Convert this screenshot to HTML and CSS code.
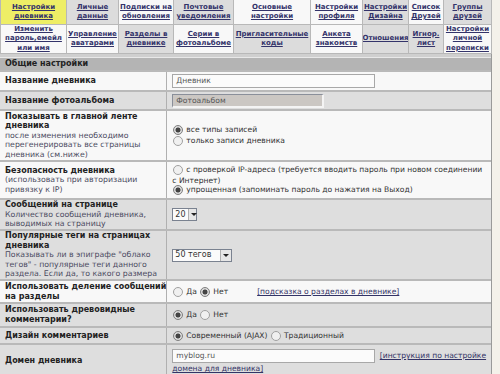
FILE: index.html
```html
<!DOCTYPE html>
<html lang="ru">

<head>
    <meta charset="UTF-8">
    <title>Настройки дневника</title>
    <link rel="stylesheet" href="styles.css">
</head>

<body>
    <div class="page">
        <div class="tabs">
            <a class="tab active">Настройки<br>дневника</a>
            <a class="tab grey">Личные<br>данные</a>
            <a class="tab">Подписки на<br>обновления</a>
            <a class="tab grey">Почтовые<br>уведомления</a>
            <a class="tab">Основные<br>настройки</a>
            <a class="tab">Настройки<br>профиля</a>
            <a class="tab grey">Настройки<br>Дизайна</a>
            <a class="tab">Список<br>Друзей</a>
            <a class="tab grey">Группы<br>друзей</a>

            <a class="tab">Изменить<br>пароль,емейл<br>или имя</a>
            <a class="tab">Управление<br>аватарами</a>
            <a class="tab grey">Разделы в<br>дневнике</a>
            <a class="tab">Серии в<br>фотоальбоме</a>
            <a class="tab grey">Пригласительные<br>коды</a>
            <a class="tab">Анкета<br>знакомств</a>
            <a class="tab grey">Отношения</a>
            <a class="tab grey">Игнор.<br>лист</a>
            <a class="tab">Настройки<br>личной<br>переписки</a>
        </div>

        <div class="strip"></div>

        <table class="settings">
            <tr class="head">
                <td colspan="2">Общие настройки</td>
            </tr>
            <tr class="r20">
                <td class="label">Название дневника</td>
                <td class="value"><span class="field wide">Дневник</span></td>
            </tr>
            <tr class="grey r19">
                <td class="label">Название фотоальбома</td>
                <td class="value"><span class="field disabled">Фотоальбом</span></td>
            </tr>
            <tr class="r51">
                <td class="label">Показывать в главной ленте<br>дневника
                    <span class="note">после изменения необходимо<br>перегенерировать все страницы<br>дневника (см.ниже)</span>
                </td>
                <td class="value">
                    <div class="opt"><span class="radio on"></span>все типы записей</div>
                    <div class="opt"><span class="radio"></span>только записи дневника</div>
                </td>
            </tr>
            <tr class="r38">
                <td class="label">Безопасность дневника
                    <span class="note">(использовать при авторизации<br>привязку к IP)</span>
                </td>
                <td class="value">
                    <div class="opt"><span class="radio"></span>с проверкой IP-адреса (требуется вводить пароль при новом соединении</div>
                    <div class="cont">с Интернет)</div>
                    <div class="opt"><span class="radio on"></span>упрощенная (запоминать пароль до нажатия на Выход)</div>
                </td>
            </tr>
            <tr class="grey r31">
                <td class="label">Сообщений на странице
                    <span class="note">Количество сообщений дневника,<br>выводимых на страницу</span>
                </td>
                <td class="value"><span class="select num">20<span class="arrow"></span></span></td>
            </tr>
            <tr class="grey r50">
                <td class="label">Популярные теги на страницах<br>дневника
                    <span class="note">Показывать ли в эпиграфе "облако<br>тегов" - популярные теги данного<br>раздела. Если да, то какого размера</span>
                </td>
                <td class="value"><span class="select tags">50 тегов<span class="arrow"></span></span></td>
            </tr>
            <tr class="r23">
                <td class="label">Использовать деление сообщений<br>на разделы</td>
                <td class="value"><span class="radio"></span>Да <span class="radio on"></span>Нет<a class="link hint">[подсказка о разделах в дневнике]</a></td>
            </tr>
            <tr class="grey r24">
                <td class="label">Использовать древовидные<br>комментарии?</td>
                <td class="value"><span class="radio on"></span>Да <span class="radio"></span>Нет</td>
            </tr>
            <tr class="grey r17">
                <td class="label">Дизайн комментариев</td>
                <td class="value"><span class="radio on"></span>Современный (AJAX) <span class="radio"></span>Традиционный</td>
            </tr>
            <tr class="grey r32">
                <td class="label">Домен дневника</td>
                <td class="value domain"><span class="field wide">myblog.ru</span> <a class="link">[инструкция по настройке<br>домена для дневника]</a></td>
            </tr>
        </table>
    </div>
</body>

</html>
```

FILE: styles.css
```css
* {
    margin: 0;
    padding: 0;
    box-sizing: border-box;
}

body {
    background-color: #f4f1ea;
    font-family: "DejaVu Sans", Verdana, sans-serif;
    font-size: 8px;
    line-height: 9.6px;
    color: #222;
}

.page {
    width: 492px;
    border-right: 1px solid #9a9a9a;
    background-color: #f8f8f8;
}

/* Tabs on top */
.tabs {
    display: grid;
    grid-template-columns: 66px 52px 55px 60px 77px 52px 46px 35px 48px;
    grid-template-rows: 25px 29px;
    border-left: 1px solid #b8b8b8;
}

.tab {
    display: flex;
    align-items: center;
    justify-content: center;
    text-align: center;
    font-weight: bold;
    font-size: 7px;
    line-height: 9.3px;
    color: #33336a;
    text-decoration: underline;
    background-color: #f8f8f8;
    border-right: 1px solid #b8b8b8;
    border-bottom: 1px solid #b8b8b8;
    white-space: nowrap;
    overflow: hidden;
}

.tab.grey {
    background-color: #dcdcdc;
}

.tab.active {
    background-color: #eeee66;
}

.strip {
    height: 4px;
    background-color: #cfcfcf;
    border-bottom: 1px solid #e8e8e8;
}

/* Settings table */
.settings {
    width: 100%;
    border-collapse: collapse;
}

.settings td {
    border-top: 2px solid #b9b9b9;
    vertical-align: middle;
    padding: 0;
    overflow: hidden;
}

.settings tr.grey td {
    background-color: #dedede;
}

.settings tr.head td {
    height: 13px;
    background-color: #b4b4b4;
    font-weight: bold;
    padding: 0 5px;
    border-top: none;
}

/* fixed row heights, like the original form */
.r17 td { height: 17px; }
.r19 td { height: 19px; }
.r20 td { height: 20px; }
.r23 td { height: 23px; }
.r24 td { height: 24px; }
.r31 td { height: 31px; }
.r32 td { height: 32px; }
.r38 td { height: 38px; }
.r50 td { height: 50px; }
.r51 td { height: 51px; }

.label {
    width: 166px;
    padding-left: 5px !important;
    font-weight: bold;
    border-right: 1px solid #b0b0b0;
    white-space: nowrap;
}

.note {
    display: block;
    font-weight: normal;
    font-size: 7.8px;
    color: #4a4a5e;
}

.value {
    padding-left: 5px !important;
    color: #333;
    font-size: 7.6px;
    white-space: nowrap;
}

.field {
    display: inline-block;
    height: 14px;
    padding: 1px 3px;
    border: 1px solid #a8a8a8;
    background-color: #fbfbfb;
    color: #555;
    line-height: 10px;
    vertical-align: middle;
}

.field.wide {
    width: 203px;
}

.field.disabled {
    width: 152px;
    height: 14px;
    background-color: #cbc7c3;
    border-color: #8a8f9a #f4f4f4 #f4f4f4 #8a8f9a;
    border-width: 1px 2px 2px 1px;
}

.opt {
    display: flex;
    align-items: center;
    height: 11px;
}

.cont {
    height: 9px;
    line-height: 9px;
}

.radio {
    display: inline-block;
    width: 10px;
    height: 10px;
    margin: 0 3px 0 1px;
    border: 1px solid #a0a0a0;
    border-radius: 50%;
    background-color: #f0f0f0;
    vertical-align: middle;
}

.radio.on {
    background: radial-gradient(circle, #444 0 2.2px, #d8d8d8 2.8px);
    border-color: #808080;
}

.select {
    display: inline-flex;
    align-items: center;
    justify-content: space-between;
    height: 13px;
    padding-left: 2px;
    border: 1px solid #7a8290;
    background-color: #fbfbfb;
    color: #333;
    font-size: 8px;
    vertical-align: middle;
}

.select.num {
    width: 25px;
}

.select.tags {
    width: 60px;
}

.arrow {
    display: inline-block;
    width: 11px;
    height: 11px;
    margin-left: 2px;
    border-left: 1px solid #b0b0b0;
    background-color: #e6e6e6;
    position: relative;
}

.arrow::after {
    content: "";
    position: absolute;
    left: 2px;
    top: 4px;
    border-left: 3px solid transparent;
    border-right: 3px solid transparent;
    border-top: 3px solid #222;
}

.link {
    color: #333366;
    text-decoration: underline;
}

.hint {
    margin-left: 29px;
}

.domain {
    line-height: 11px;
    padding-top: 2px !important;
}

.domain .link {
    margin-left: 2px;
}
```
